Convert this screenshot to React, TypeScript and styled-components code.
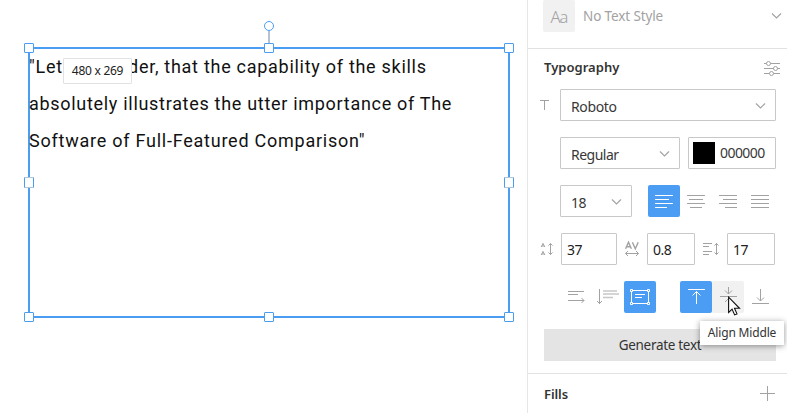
import React from "react";
import styled, { createGlobalStyle, css } from "styled-components";

const BLUE = "#4a9df3";
const GREY = "#a2a2a2";

const GlobalStyle = createGlobalStyle`
  * { box-sizing: border-box; }
  body { margin: 0; background: #fff; overflow: hidden; }
`;

const Screen = styled.div`
  display: flex;
  width: 787px;
  height: 413px;
  overflow: hidden;
  background: #fff;
  color: #333;
  font-family: "Noto Sans", "Open Sans", sans-serif;
  font-size: 14px;
`;

const Canvas = styled.main`
  flex: 0 0 527px;
  padding: 47px 0 0 28px;
`;

const TextFrame = styled.div`
  position: relative;
  width: 482px;
  height: 271px;
  border: 2px solid ${BLUE};
`;

const Copy = styled.div`
  margin: -1px 0 0 -1px;
  color: #111;
  font: 400 18px/37px Roboto, sans-serif;
  white-space: pre;
`;

const CopyLine = styled.p<{ $track: number }>`
  margin: 0;
  letter-spacing: ${(p) => p.$track}px;
`;

const Handle = styled.span<{ $x: number; $y: number; $round?: boolean; $side?: boolean }>`
  position: absolute;
  left: ${(p) => p.$x}px;
  top: ${(p) => p.$y}px;
  width: 10px;
  height: ${(p) => (p.$side ? 11 : 10)}px;
  border: 1px solid ${BLUE};
  border-radius: ${(p) => (p.$round ? "50%" : "1px")};
  background: #fff;
  ${(p) => p.$side && "border-top-color: #b3c6d9; border-bottom-color: #b3c6d9;"}
`;

const Stem = styled.span`
  position: absolute;
  left: 238px;
  top: -18px;
  width: 2px;
  height: 13px;
  background: #b5c1ce;
`;

const SizeBadge = styled.div`
  position: absolute;
  left: 33px;
  top: 9px;
  width: 69px;
  height: 26px;
  border: 1px solid #e2e2e2;
  border-radius: 1px;
  background: #fff;
  color: #222;
  font-size: 12px;
  line-height: 24px;
  letter-spacing: -0.26px;
  text-align: center;
  white-space: nowrap;
`;

const Panel = styled.aside`
  flex: 1;
  border-left: 1px solid #e6e6e6;
`;

const StyleRow = styled.div`
  display: flex;
  align-items: flex-start;
  height: 49px;
  padding: 0 5px 0 15px;
  border-bottom: 1px solid #e2e2e2;
`;

const StyleThumb = styled.div`
  width: 32px;
  height: 32px;
  border-radius: 2px;
  background: #f1f1f1;
  color: ${GREY};
  font-size: 16.5px;
  font-weight: 300;
  line-height: 33px;
  text-align: center;
  letter-spacing: -0.9px;
`;

const StyleName = styled.span`
  flex: 1;
  margin-left: 8px;
  color: ${GREY};
  font-size: 13.5px;
  line-height: 32px;
  letter-spacing: -0.12px;
`;

const Header = styled.div`
  display: flex;
  align-items: center;
  justify-content: space-between;
  height: 40px;
  padding: 0 7px 2px 16px;
`;

const Title = styled.h2<{ $track: number; $lift?: number }>`
  margin: 0;
  padding-bottom: ${(p) => p.$lift ?? 0}px;
  color: #333;
  font-size: 13px;
  font-weight: 600;
  letter-spacing: ${(p) => p.$track}px;
`;

const Controls = styled.div`
  display: grid;
  grid-auto-rows: 32px;
  row-gap: 16px;
  width: 232px;
  margin-left: 16px;
`;

const Row = styled.div<{ $indent?: number }>`
  display: flex;
  padding-left: ${(p) => p.$indent ?? 0}px;
`;

const Label = styled.span<{ $width: number; $outset?: number }>`
  display: flex;
  align-items: center;
  flex: 0 0 ${(p) => p.$width}px;
  height: 32px;
  margin-left: ${(p) => -(p.$outset ?? 0)}px;
`;

const field = css`
  border: 1px solid #c8c8c8;
  border-radius: 1px;
  background: #fff;
  color: #383838;
  font: inherit;
  white-space: nowrap;
`;

const Select = styled.div<{ $width: number; $track?: number }>`
  ${field}
  display: flex;
  align-items: center;
  justify-content: space-between;
  width: ${(p) => p.$width}px;
  height: 32px;
  padding: 1px 9px 0 10px;
  letter-spacing: ${(p) => p.$track ?? 0}px;
`;

const SelectValue = styled.span`
  padding-top: 2px;
  line-height: 28px;
`;

const ColorField = styled.div`
  ${field}
  display: flex;
  align-items: center;
  gap: 5px;
  width: 88px;
  height: 32px;
  margin-left: 8px;
  padding-left: 4px;
  line-height: 30px;
  letter-spacing: -0.55px;
`;

const Swatch = styled.span`
  width: 22px;
  height: 22px;
  background: #000;
`;

const NumberField = styled.div<{ $width: number }>`
  ${field}
  width: ${(p) => p.$width}px;
  height: 32px;
  padding-left: 5px;
  color: #222;
  line-height: 32px;
  letter-spacing: -0.5px;
`;

const ToolButton = styled.button<{ $active?: boolean; $hover?: boolean; $gap?: number }>`
  display: grid;
  place-items: center;
  width: 32px;
  height: 32px;
  margin: 0 0 0 ${(p) => p.$gap ?? 0}px;
  padding: 0;
  border: 0;
  border-radius: 2px;
  background: ${(p) => (p.$active ? BLUE : p.$hover ? "#f1f1f1" : "transparent")};
  color: ${(p) => (p.$active ? "#fff" : GREY)};
`;

const GenerateButton = styled.button`
  padding: 0;
  border: 0;
  background: #e4e4e4;
  color: #333;
  font: inherit;
  font-size: 13.5px;
  letter-spacing: -0.3px;
`;

const FillsHeader = styled(Header)`
  margin-top: 12px;
  padding: 0 12px 0 16px;
  border-top: 1px solid #e2e2e2;
`;

const HoverTarget = styled.div`
  position: relative;
`;

const Tooltip = styled.div`
  position: absolute;
  left: -12px;
  top: 40px;
  z-index: 2;
  width: 84px;
  height: 24px;
  background: #fff;
  box-shadow: 0 1px 6px rgba(0, 0, 0, 0.42);
  color: #333;
  font-size: 12px;
  line-height: 24px;
  letter-spacing: -0.17px;
  text-align: center;
  white-space: nowrap;
`;

const Pointer = styled.svg`
  position: absolute;
  left: 16px;
  top: 15px;
  z-index: 3;
`;

const Line = styled.svg.attrs({ fill: "none", stroke: "currentColor", strokeWidth: 1 })`
  display: block;
  flex: none;
`;

const MutedLine = styled(Line)`
  color: ${GREY};
`;

const Chevron = () => (
  <MutedLine width="11" height="8" viewBox="0 0 11 8">
    <path d="M1 1.5 5.5 6 10 1.5" strokeWidth="1.15" />
  </MutedLine>
);

const alignPaths = {
  left: "M7 10.5h18M7 14.5h14M7 18.5h18M7 22.5h12",
  center: "M7 10.5h18M9 14.5h14M7 18.5h18M10 22.5h12",
  right: "M7 10.5h18M11 14.5h14M7 18.5h18M13 22.5h12",
  justify: "M7 10.5h18M7 14.5h18M7 18.5h18M7 22.5h18",
};

const ToolIcon = ({ d }: { d: string }) => (
  <Line width="32" height="32" viewBox="0 0 32 32"><path d={d} /></Line>
);

const handles: [number, number][] = [
  [-6, -6], [234, -6], [474, -6],
  [-6, 128], [474, 128],
  [-6, 263], [234, 263], [474, 263],
];

export default function App() {
  return (
    <>
      <GlobalStyle />
      <Screen>
        <Canvas>
          <TextFrame>
            <Copy>
              <CopyLine $track={0.72}>"Let's consider, that the capability of the skills</CopyLine>
              <CopyLine $track={0.7}>absolutely illustrates the utter importance of The</CopyLine>
              <CopyLine $track={0.76}>Software of Full-Featured Comparison"</CopyLine>
            </Copy>
            <Stem />
            <Handle $x={234} $y={-28} $round />
            {handles.map(([x, y]) => <Handle key={`${x}:${y}`} $x={x} $y={y} $side={y === 128} />)}
            <SizeBadge>480 x 269</SizeBadge>
          </TextFrame>
        </Canvas>
        <Panel>
          <StyleRow>
            <StyleThumb>Aa</StyleThumb>
            <StyleName>No Text Style</StyleName>
            <Label $width={11}><Chevron /></Label>
          </StyleRow>
          <Header>
            <Title $track={0.03} $lift={2}>Typography</Title>
            <MutedLine width="16" height="16" viewBox="0 0 16 16">
              <path d="M0 3.5h2.5M6.5 3.5H16M0 8.5h9.5M13.5 8.5H16M0 13.5h5.5M9.5 13.5H16" />
              <circle cx="4.5" cy="3.5" r="2" /><circle cx="11.5" cy="8.5" r="2" /><circle cx="7.5" cy="13.5" r="2" />
            </MutedLine>
          </Header>
          <Controls>
            <Row>
              <Label $width={20} $outset={4}>
                <MutedLine width="9" height="12" viewBox="0 0 9 12"><path d="M0 1.5h9M4.5 1.5V11" /></MutedLine>
              </Label>
              <Select $width={216} $track={-0.35}><SelectValue>Roboto</SelectValue><Chevron /></Select>
            </Row>
            <Row $indent={16}>
              <Select $width={120} $track={-0.5}><SelectValue>Regular</SelectValue><Chevron /></Select>
              <ColorField><Swatch />000000</ColorField>
            </Row>
            <Row $indent={16}>
              <Select $width={72} $track={-0.5}><SelectValue>18</SelectValue><Chevron /></Select>
              <ToolButton $active $gap={16}><ToolIcon d={alignPaths.left} /></ToolButton>
              <ToolButton><ToolIcon d={alignPaths.center} /></ToolButton>
              <ToolButton><ToolIcon d={alignPaths.right} /></ToolButton>
              <ToolButton><ToolIcon d={alignPaths.justify} /></ToolButton>
            </Row>
            <Row>
              <Label $width={21} $outset={4}>
                <MutedLine width="21" height="32" viewBox="0 0 21 32">
                  <path d="M1.2 14 3 10.4 4.8 14M1.8 13h2.4M1.2 22 3 18.4 4.8 22M1.8 21h2.4" />
                  <path d="M10.5 10.5v11M8.5 12.5l2-2 2 2M8.5 19.5l2 2 2-2" />
                </MutedLine>
              </Label>
              <NumberField $width={56}>37</NumberField>
              <Label $width={30}>
                <MutedLine width="30" height="32" viewBox="0 0 30 32">
                  <path d="M8.6 15.8 11.5 9.3l2.9 6.5M9.7 13.8h3.6M15.4 9.2l2.9 6.5 2.9-6.5" strokeWidth="1.4" />
                  <path d="M8.5 20.5h13M11 18l-2.5 2.5L11 23M19 18l2.5 2.5L19 23" />
                </MutedLine>
              </Label>
              <NumberField $width={48}>0.8</NumberField>
              <Label $width={32}>
                <MutedLine width="32" height="32" viewBox="0 0 32 32">
                  <path d="M8 10.5h9M8 13.5h6M8 18.5h9M8 21.5h6" />
                  <path d="M21.5 10.5v11M19.5 12.5l2-2 2 2M19.5 19.5l2 2 2-2" />
                </MutedLine>
              </Label>
              <NumberField $width={48}>17</NumberField>
            </Row>
            <Row $indent={16}>
              <ToolButton><ToolIcon d="M8 10.5h16M8 13.5h10M8 19.5h16M21.5 17l2.5 2.5-2.5 2.5" /></ToolButton>
              <ToolButton>
                <Line width="32" height="32" viewBox="0 0 32 32">
                  <path d="M7.5 8v15M5 20l2.5 2.5L10 20" />
                  <path d="M11 10h14M11 13h16M11 16.5h10" strokeOpacity=".6" strokeWidth="1.7" />
                </Line>
              </ToolButton>
              <ToolButton $active>
                <Line width="32" height="32" viewBox="0 0 32 32">
                  <path d="M9 9.5h14M9 22.5h14M7.5 11v10M24.5 11v10M11 13.5h10M11 16.5h7" />
                  <path d="M6.5 8.5h2v2h-2zM23.5 8.5h2v2h-2zM6.5 21.5h2v2h-2zM23.5 21.5h2v2h-2z" />
                </Line>
              </ToolButton>
              <ToolButton $active $gap={24}><ToolIcon d="M8 8.5h17M16.5 23V10.5M12.5 14.5l4-4 4 4" /></ToolButton>
              <HoverTarget>
                <ToolButton $hover><ToolIcon d="M8 15.5h17M16.5 6v7M13 9.5l3.5 3.5L20 9.5M16.5 24v-6M13 21l3.5-3.5L20 21" /></ToolButton>
                <Tooltip>Align Middle</Tooltip>
                <Pointer width="13" height="21" viewBox="0 0 13 21">
                  <path d="M.6 1.2V16.5l3.5-3.4 2.5 5.8 2.4-1-2.5-5.6h5z" fill="#fff" stroke="#111" strokeWidth="1.1" />
                </Pointer>
              </HoverTarget>
              <ToolButton><ToolIcon d="M8 22.5h17M16.5 8v12M13 16.5l3.5 3.5 3.5-3.5" /></ToolButton>
            </Row>
            <GenerateButton>Generate text</GenerateButton>
          </Controls>
          <FillsHeader>
            <Title $track={-0.1}>Fills</Title>
            <MutedLine width="16" height="16" viewBox="0 0 16 16"><path d="M1 7.5h15M8.5 0v15" /></MutedLine>
          </FillsHeader>
        </Panel>
      </Screen>
    </>
  );
}
